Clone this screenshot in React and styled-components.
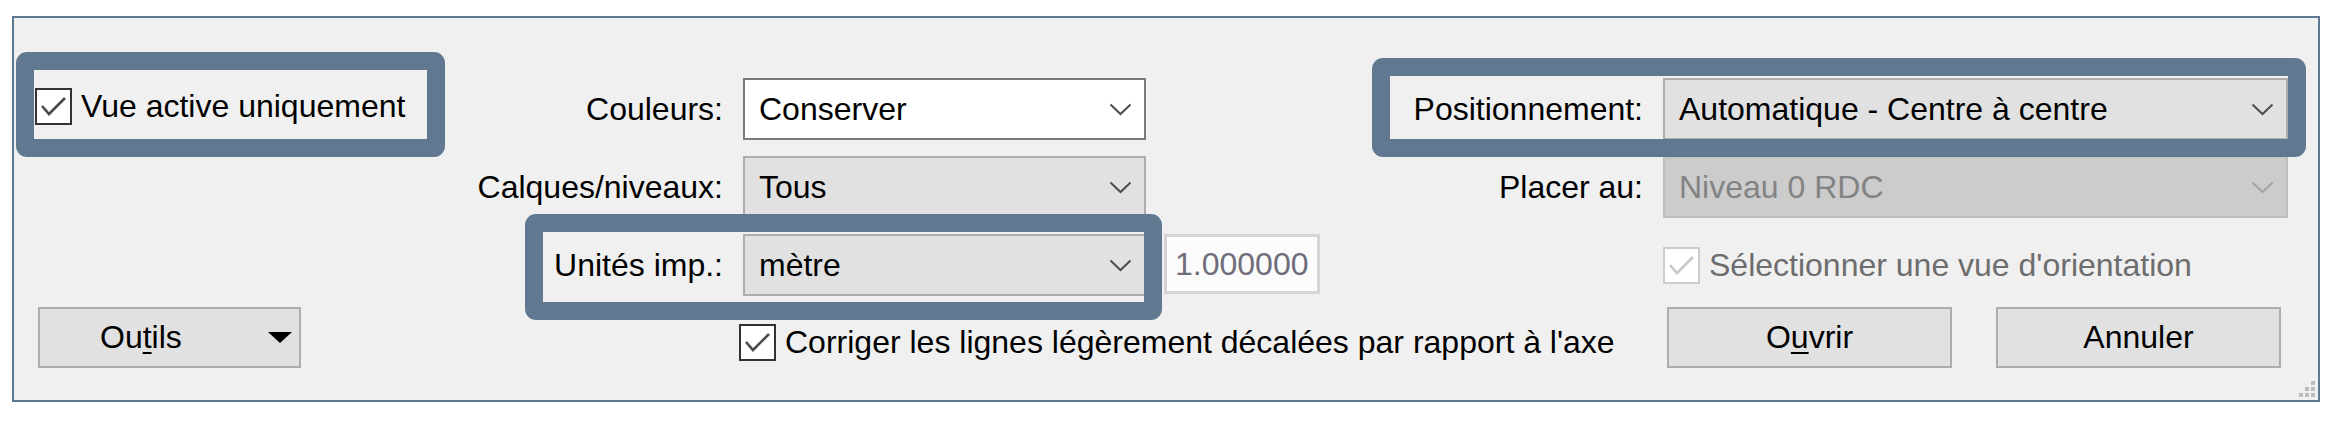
import React from 'react';
import styled, { createGlobalStyle } from 'styled-components';

const GlobalStyle = createGlobalStyle`
  html, body {
    margin: 0;
    background: #ffffff;
  }
  body {
    font-family: "Liberation Sans", Arial, sans-serif;
    font-size: 32px;
    color: #000000;
  }
`;

const Page = styled.div`
  padding: 16px 0 0 12px;
`;

const Dialog = styled.div`
  position: relative;
  box-sizing: border-box;
  width: 2308px;
  height: 386px;
  padding: 60px 30px 32px 16px;
  border: 2px solid #5f7892;
  background: #f0f0f0;
  display: grid;
  grid-template-columns: 495px 218px 421px 152px 347px 625px;
  grid-template-rows: 78px 78px 72px 62px;
  grid-template-areas:
    "opt   colL  colC  .     pos   pos"
    ".     layL  layC  .     plcL  plcC"
    ".     units units field .     orient"
    "tools .     fix   fix   fix   btns";
`;

// annotation frames drawn over the dialog
const Highlight = styled.div`
  position: relative;
  box-sizing: border-box;
  display: flex;
  align-self: start;

  &::after {
    content: '';
    position: absolute;
    inset: -18px;
    border: 18px solid #617990;
    border-radius: 11px;
    pointer-events: none;
    z-index: 2;
  }
`;

const OptionHighlight = styled(Highlight)`
  grid-area: opt;
  align-items: center;
  margin: -8px 0 0 4px;
  width: 393px;
  height: 69px;
  padding: 4px 0 0 1px;
`;

const PositionHighlight = styled(Highlight)`
  grid-area: pos;
  justify-self: end;
  align-items: flex-start;
  margin-top: -2px;
  width: 898px;
  height: 63px;
`;

const UnitsHighlight = styled(Highlight)`
  grid-area: units;
  align-items: flex-start;
  margin: -2px 0 0 18px;
  width: 601px;
  height: 70px;
`;

const FieldLabel = styled.div`
  grid-area: ${p => p.$area || 'auto'};
  box-sizing: border-box;
  display: flex;
  align-items: center;
  justify-content: flex-end;
  align-self: start;
  flex-shrink: 0;
  width: ${p => (p.$width ? `${p.$width}px` : 'auto')};
  height: 62px;
  margin-top: ${p => (p.$inset ? '2px' : '0')};
  padding-right: 20px;
  white-space: nowrap;
`;

const comboColors = {
  edit: { bg: '#ffffff', border: '#7a7a7a', text: '#000000', arrow: '#4d4d4d' },
  plain: { bg: '#e1e1e1', border: '#adadad', text: '#000000', arrow: '#4d4d4d' },
  disabled: { bg: '#cccccc', border: '#bfbfbf', text: '#838383', arrow: '#a3a3a3' },
};

const ComboBox = styled.div`
  grid-area: ${p => p.$area || 'auto'};
  box-sizing: border-box;
  display: flex;
  align-items: center;
  justify-content: space-between;
  align-self: start;
  flex-shrink: 0;
  width: ${p => p.$width}px;
  height: 62px;
  margin-top: ${p => (p.$inset ? '2px' : '0')};
  padding: 0 12px 0 14px;
  border: 2px solid ${p => comboColors[p.$variant].border};
  background: ${p => comboColors[p.$variant].bg};
  color: ${p => comboColors[p.$variant].text};
  white-space: nowrap;

  svg {
    color: ${p => comboColors[p.$variant].arrow};
  }
`;

const Chevron = () => (
  <svg width="23" height="13" viewBox="0 0 23 13">
    <polyline points="1.5,1.5 11.5,11 21.5,1.5" fill="none" stroke="currentColor" strokeWidth="2" />
  </svg>
);

const Combo = ({ value, variant = 'plain', width = 403, area, inset }) => (
  <ComboBox $variant={variant} $width={width} $area={area} $inset={inset}>
    <span>{value}</span>
    <Chevron />
  </ComboBox>
);

const NumberField = styled.div`
  grid-area: field;
  box-sizing: border-box;
  display: flex;
  align-items: center;
  align-self: start;
  width: 156px;
  height: 60px;
  padding-left: 8px;
  border: 3px solid #d5d5d5;
  background: #fbfbfb;
  box-shadow: inset 0 0 0 2px #ffffff;
  color: #6f6d7c;
`;

const CheckRow = styled.label`
  grid-area: ${p => p.$area || 'auto'};
  display: flex;
  align-items: center;
  align-self: ${p => p.$align || 'center'};
  gap: 9px;
  margin: ${p => p.$margin || '0'};
  color: ${p => (p.$disabled ? '#6d6d6d' : '#000000')};
  white-space: nowrap;
`;

const Box = styled.span`
  box-sizing: border-box;
  display: flex;
  align-items: center;
  justify-content: center;
  flex-shrink: 0;
  width: 37px;
  height: 37px;
  border: 2px solid ${p => (p.$disabled ? '#cccccc' : '#333333')};
  background: #ffffff;
  color: ${p => (p.$disabled ? '#c8c8c8' : '#4a4a4a')};
`;

const CheckBox = ({ disabled }) => (
  <Box $disabled={disabled}>
    <svg width="29" height="29" viewBox="0 0 29 29">
      <polyline points="3,14 10,22 26,6" fill="none" stroke="currentColor" strokeWidth="2.6" />
    </svg>
  </Box>
);

const Button = styled.div`
  box-sizing: border-box;
  display: flex;
  align-items: center;
  justify-content: center;
  width: ${p => p.$width}px;
  height: 61px;
  margin-top: 1px;
  border: 2px solid #adadad;
  background: #e1e1e1;
`;

const ToolsButton = styled(Button)`
  grid-area: tools;
  justify-content: flex-start;
  margin-left: 8px;
  padding: 0 7px 0 60px;

  svg {
    margin-left: auto;
  }
`;

const ButtonRow = styled.div`
  grid-area: btns;
  display: flex;
  gap: 44px;
  padding-left: 4px;
`;

const AccessKey = styled.u`
  text-decoration-thickness: 2px;
  text-underline-offset: 4px;
`;

const Grip = styled.svg`
  position: absolute;
  right: 3px;
  bottom: 3px;
`;

export default function App() {
  return (
    <>
      <GlobalStyle />
      <Page>
        <Dialog>
          <OptionHighlight>
            <CheckRow>
              <CheckBox />
              Vue active uniquement
            </CheckRow>
          </OptionHighlight>

          <FieldLabel $area="colL">Couleurs:</FieldLabel>
          <Combo area="colC" variant="edit" value="Conserver" />

          <PositionHighlight>
            <FieldLabel $width={273} $inset>Positionnement:</FieldLabel>
            <Combo width={625} inset value="Automatique - Centre à centre" />
          </PositionHighlight>

          <FieldLabel $area="layL">Calques/niveaux:</FieldLabel>
          <Combo area="layC" value="Tous" />

          <FieldLabel $area="plcL">Placer au:</FieldLabel>
          <Combo area="plcC" variant="disabled" width={625} value="Niveau 0 RDC" />

          <UnitsHighlight>
            <FieldLabel $width={200} $inset>Unités imp.:</FieldLabel>
            <Combo inset value="mètre" />
          </UnitsHighlight>

          <NumberField>1.000000</NumberField>

          <CheckRow $area="orient" $disabled $margin="-9px 0 0 0">
            <CheckBox disabled />
            Sélectionner une vue d'orientation
          </CheckRow>

          <ToolsButton $width={263}>
            <span>
              Ou<AccessKey>t</AccessKey>ils
            </span>
            <svg width="24" height="11" viewBox="0 0 24 11">
              <polygon points="0,0 24,0 12,11" fill="#000000" />
            </svg>
          </ToolsButton>

          <CheckRow $area="fix" $margin="10px 0 0 -4px">
            <CheckBox />
            Corriger les lignes légèrement décalées par rapport à l'axe
          </CheckRow>

          <ButtonRow>
            <Button $width={285}>
              <span>
                O<AccessKey>u</AccessKey>vrir
              </span>
            </Button>
            <Button $width={285}>Annuler</Button>
          </ButtonRow>

          <Grip width="16" height="16" viewBox="0 0 16 16">
            <rect x="12" y="0" width="4" height="4" fill="#bcbcbc" />
            <rect x="6" y="6" width="4" height="4" fill="#bcbcbc" />
            <rect x="12" y="6" width="4" height="4" fill="#bcbcbc" />
            <rect x="0" y="12" width="4" height="4" fill="#bcbcbc" />
            <rect x="6" y="12" width="4" height="4" fill="#bcbcbc" />
            <rect x="12" y="12" width="4" height="4" fill="#bcbcbc" />
          </Grip>
        </Dialog>
      </Page>
    </>
  );
}
